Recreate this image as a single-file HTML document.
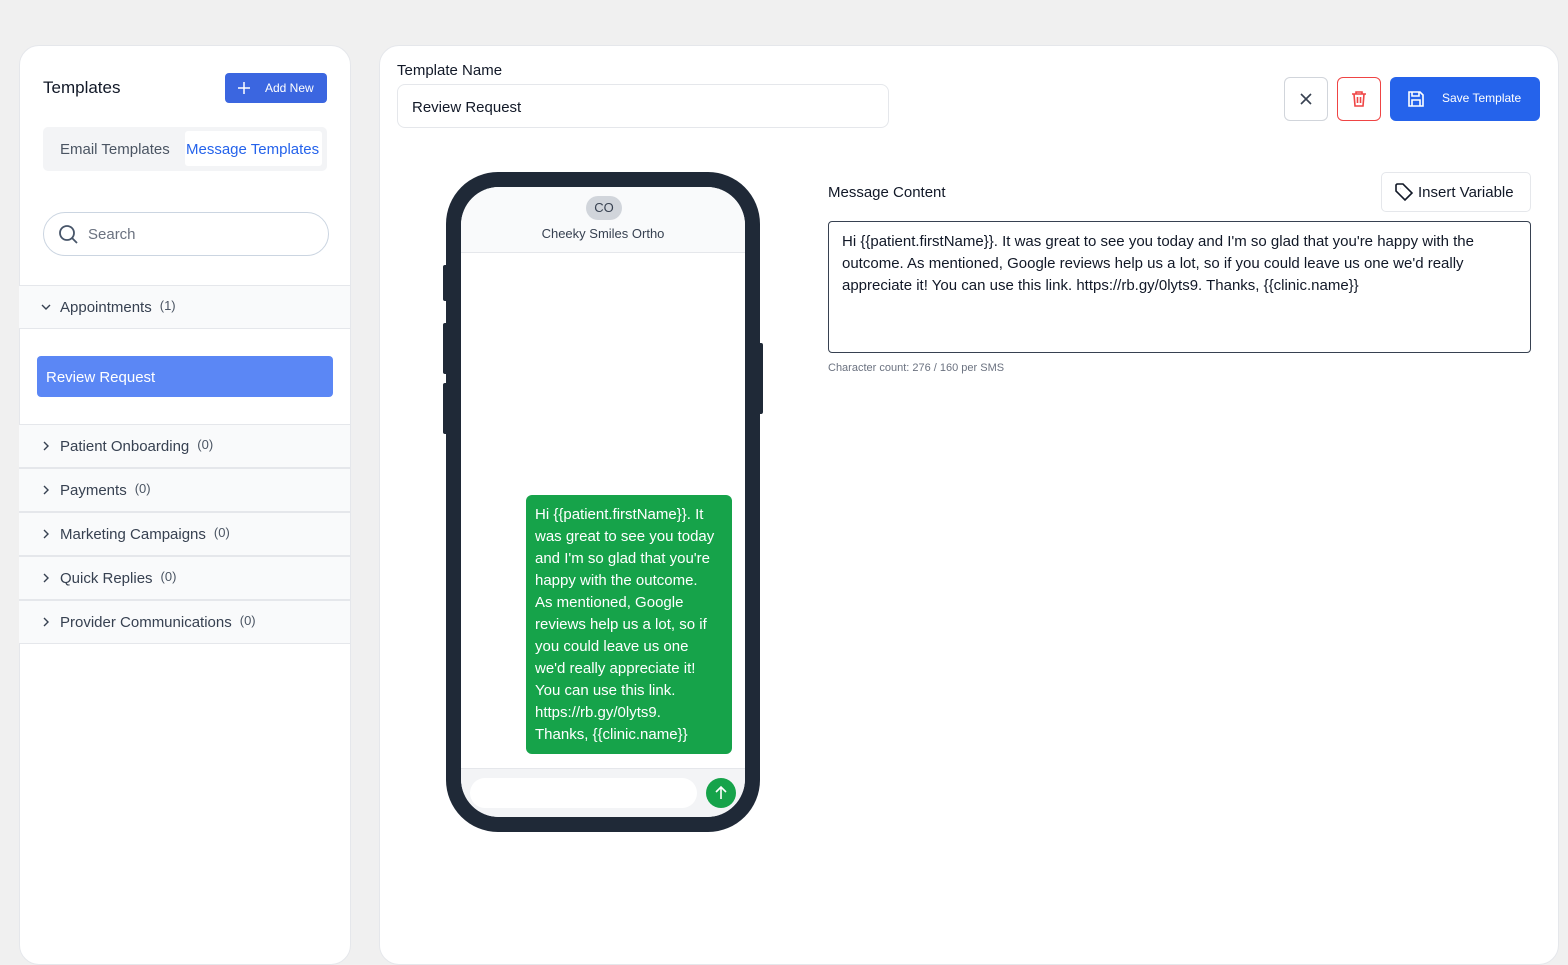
<!DOCTYPE html>
<html><head><style>
*{box-sizing:border-box;margin:0;padding:0}
body{width:1568px;height:946px;background:#f0f0f0;font-family:"Liberation Sans",sans-serif;position:relative;overflow:hidden;color:#1f2937}
.abs{position:absolute}
.panel{background:#fff;border:1px solid #e5e7eb;border-radius:20px}
.row{position:absolute;left:19px;width:331px;height:44px;background:#f9fafb;border-top:1px solid #e5e7eb;border-bottom:1px solid #e5e7eb;font-size:15px;color:#374151;display:flex;align-items:center;padding-left:22px}
.row svg{margin-right:9px}
.row small{font-size:13px;color:#4b5563;margin-left:8px;margin-top:-4px}
</style></head><body>
<div class="abs panel" style="left:19px;top:45px;width:332px;height:920px"></div>
<div class="abs" style="left:43px;top:78px;font-size:17px;color:#111827">Templates</div>
<div class="abs" style="left:225px;top:73px;width:102px;height:30px;background:#3b66e0;border-radius:4px;color:#fff;font-size:12px;display:flex;align-items:center;padding-left:12px">
<svg width="14" height="14" viewBox="0 0 14 14" stroke="#fff" stroke-width="1.5"><path d="M7 1v12M1 7h12"/></svg><span style="margin-left:14px">Add New</span></div>
<div class="abs" style="left:43px;top:127px;width:284px;height:44px;background:#f3f4f6;border-radius:5px"></div>
<div class="abs" style="left:60px;top:141px;font-size:15px;color:#4b5563">Email Templates</div>
<div class="abs" style="left:185px;top:131px;width:137px;height:35px;background:#fff;border-radius:3px;font-size:15px;color:#2563eb;padding:10px 0 0 1px;white-space:nowrap">Message Templates</div>
<div class="abs" style="left:43px;top:212px;width:286px;height:44px;border:1px solid #cbd5e1;border-radius:22px"></div>
<svg class="abs" style="left:57px;top:223px" width="22" height="22" viewBox="0 0 22 22" fill="none" stroke="#475569" stroke-width="1.8"><circle cx="10" cy="10" r="7"/><path d="M15 15l5 5"/></svg>
<div class="abs" style="left:88px;top:226px;font-size:15px;color:#6b7280">Search</div>
<div class="row" style="top:285px"><svg width="10" height="10" viewBox="0 0 10 10" fill="none" stroke="#374151" stroke-width="1.4"><path d="M1 3l4 4 4-4"/></svg>Appointments<small>(1)</small></div>
<div class="abs" style="left:37px;top:356px;width:296px;height:41px;background:#5b87f5;border-radius:4px;color:#fff;font-size:15px;padding:13px 0 0 9px">Review Request</div>
<div class="row" style="top:424px"><svg width="10" height="10" viewBox="0 0 10 10" fill="none" stroke="#374151" stroke-width="1.4"><path d="M3 1l4 4-4 4"/></svg>Patient Onboarding<small>(0)</small></div>
<div class="row" style="top:468px"><svg width="10" height="10" viewBox="0 0 10 10" fill="none" stroke="#374151" stroke-width="1.4"><path d="M3 1l4 4-4 4"/></svg>Payments<small>(0)</small></div>
<div class="row" style="top:512px"><svg width="10" height="10" viewBox="0 0 10 10" fill="none" stroke="#374151" stroke-width="1.4"><path d="M3 1l4 4-4 4"/></svg>Marketing Campaigns<small>(0)</small></div>
<div class="row" style="top:556px"><svg width="10" height="10" viewBox="0 0 10 10" fill="none" stroke="#374151" stroke-width="1.4"><path d="M3 1l4 4-4 4"/></svg>Quick Replies<small>(0)</small></div>
<div class="row" style="top:600px"><svg width="10" height="10" viewBox="0 0 10 10" fill="none" stroke="#374151" stroke-width="1.4"><path d="M3 1l4 4-4 4"/></svg>Provider Communications<small>(0)</small></div>

<div class="abs panel" style="left:379px;top:45px;width:1180px;height:920px"></div>
<div class="abs" style="left:397px;top:62px;font-size:15px;color:#111827">Template Name</div>
<div class="abs" style="left:397px;top:84px;width:492px;height:44px;border:1px solid #e5e7eb;border-radius:8px;font-size:15px;padding:14px 0 0 14px;color:#111827">Review Request</div>
<div class="abs" style="left:1284px;top:77px;width:44px;height:44px;border:1px solid #d1d5db;border-radius:6px"></div>
<svg class="abs" style="left:1299px;top:92px" width="14" height="14" viewBox="0 0 14 14" stroke="#374151" stroke-width="1.6"><path d="M2 2l10 10M12 2L2 12"/></svg>
<div class="abs" style="left:1337px;top:77px;width:44px;height:44px;border:1px solid #ef4444;border-radius:6px"></div>
<svg class="abs" style="left:1350px;top:90px" width="18" height="18" viewBox="0 0 18 18" fill="none" stroke="#ef4444" stroke-width="1.6"><path d="M2 4h14M6 4V2h6v2M4 4l1 12h8l1-12M7.5 7v6M10.5 7v6"/></svg>
<div class="abs" style="left:1390px;top:77px;width:150px;height:44px;background:#2563eb;border-radius:6px;color:#fff;font-size:12px;padding:14px 0 0 52px">Save Template</div>
<svg class="abs" style="left:1407px;top:90px" width="18" height="18" viewBox="0 0 18 18" fill="none" stroke="#fff" stroke-width="1.6"><path d="M3 2h10l3 3v11H2V2zM5 2v4h7V2M5 16v-6h8v6"/></svg>

<div class="abs" style="left:443px;top:265px;width:5px;height:36px;background:#1f2937;border-radius:2px"></div>
<div class="abs" style="left:443px;top:323px;width:5px;height:51px;background:#1f2937;border-radius:2px"></div>
<div class="abs" style="left:443px;top:383px;width:5px;height:51px;background:#1f2937;border-radius:2px"></div>
<div class="abs" style="left:758px;top:343px;width:5px;height:71px;background:#1f2937;border-radius:2px"></div>
<div class="abs" style="left:446px;top:172px;width:314px;height:660px;background:#1f2937;border-radius:52px"></div>
<div class="abs" style="left:461px;top:187px;width:284px;height:630px;background:#fff;border-radius:38px;overflow:hidden">
 <div style="height:66px;background:#f9fafb;border-bottom:1px solid #e5e7eb;position:relative">
  <div style="position:absolute;left:125px;top:9px;width:36px;height:24px;border-radius:12px;background:#d1d5db;font-size:13px;text-align:center;line-height:24px;color:#374151">CO</div>
  <div style="position:absolute;left:0;right:0;top:39px;text-align:center;font-size:13px;color:#374151">Cheeky Smiles Ortho</div>
 </div>
 <div style="position:absolute;left:65px;top:308px;width:206px;height:259px;background:#16a34a;border-radius:6px;color:#fff;font-size:15px;line-height:22px;padding:9px 9px;white-space:nowrap">Hi {{patient.firstName}}. It<br>was great to see you today<br>and I'm so glad that you're<br>happy with the outcome.<br>As mentioned, Google<br>reviews help us a lot, so if<br>you could leave us one<br>we'd really appreciate it!<br>You can use this link.<br>https://rb.gy/0lyts9.<br>Thanks, {{clinic.name}}</div>
 <div style="position:absolute;left:0;right:0;top:581px;bottom:0;background:#f3f4f6;border-top:1px solid #e5e7eb">
  <div style="position:absolute;left:9px;top:9px;width:227px;height:30px;background:#fff;border-radius:15px"></div>
  <div style="position:absolute;left:245px;top:9px;width:30px;height:30px;background:#16a34a;border-radius:50%"></div>
  <svg style="position:absolute;left:252px;top:16px" width="16" height="16" viewBox="0 0 16 16" fill="none" stroke="#fff" stroke-width="1.6"><path d="M8 14V2M3 7l5-5 5 5"/></svg>
 </div>
</div>

<div class="abs" style="left:828px;top:184px;font-size:15px;color:#111827">Message Content</div>
<div class="abs" style="left:1381px;top:172px;width:150px;height:40px;border:1px solid #e5e7eb;border-radius:5px;font-size:15px;padding:11px 0 0 36px;color:#111827">Insert Variable</div>
<svg class="abs" style="left:1394px;top:182px" width="20" height="20" viewBox="0 0 20 20" fill="none" stroke="#111827" stroke-width="1.6"><path d="M2 3v6l9 9 7-7-9-9H3zM6 6.5h.1"/></svg>
<div class="abs" style="left:828px;top:221px;width:703px;height:132px;border:1px solid #374151;border-radius:4px;font-size:15px;line-height:22px;padding:9px 13px;color:#111827">Hi {{patient.firstName}}. It was great to see you today and I'm so glad that you're happy with the outcome. As mentioned, Google reviews help us a lot, so if you could leave us one we'd really appreciate it! You can use this link. https://rb.gy/0lyts9. Thanks, {{clinic.name}}</div>
<div class="abs" style="left:828px;top:362px;font-size:11px;color:#6b7280">Character count: 276 / 160 per SMS</div>
</body></html>
